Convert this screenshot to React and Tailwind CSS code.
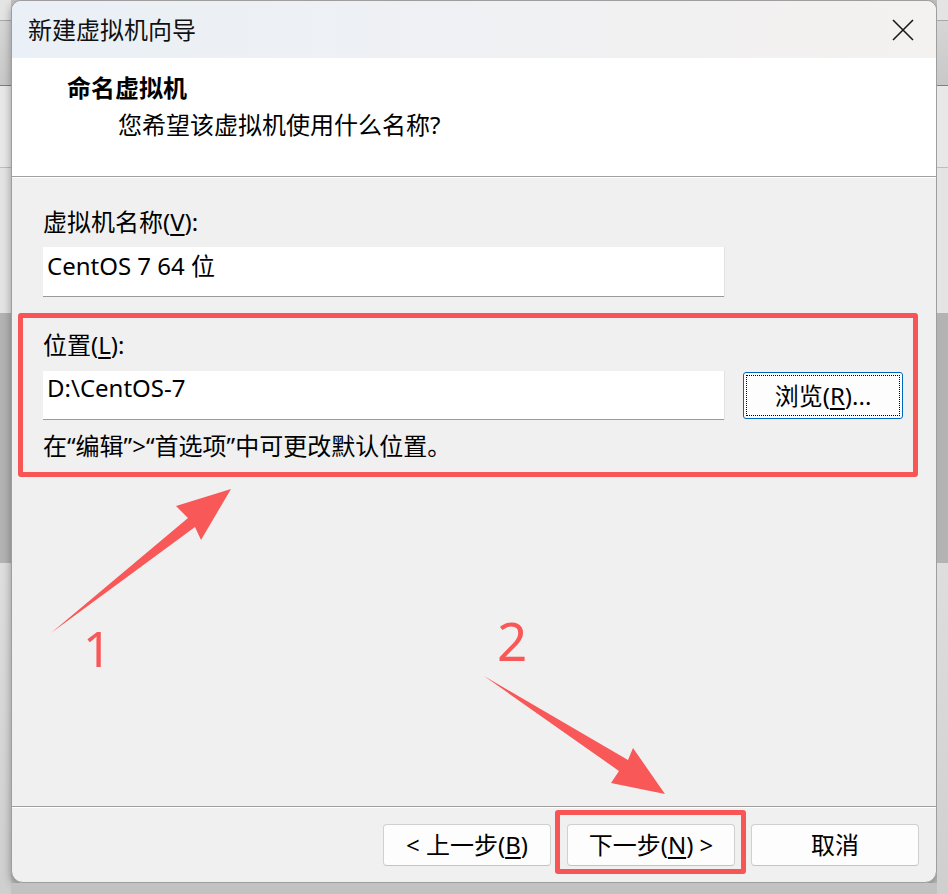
import React from "react";

const FONT = { fontFamily: '"Noto Sans", "Noto Sans CJK SC", sans-serif' };

function Strip() {
  return (
    <div className="flex flex-col w-[11px] h-[894px] shrink-0">
      <div className="h-[20px] bg-[#e4e4e4]" />
      <div className="h-[1px] bg-[#a8a8a8]" />
      <div className="h-[64px] bg-gradient-to-b from-[#d6d6d6] to-[#c8c8c8]" />
      <div className="h-[1px] bg-[#4a8cc4]" />
      <div className="h-[81px] bg-[#e8e8e8]" />
      <div className="h-[1px] bg-[#bdbdbd]" />
      <div className="h-[145px] bg-[#e4e4e4]" />
      <div className="h-[250px] bg-[#b3b3b3]" />
      <div className="h-[331px] bg-gradient-to-b from-[#dedede] to-[#cfcfcf]" />
    </div>
  );
}

function U({ children }) {
  return <span className="underline underline-offset-[3px] decoration-[1.5px]">{children}</span>;
}

function FooterButton({ children }) {
  return (
    <div className="w-[168px] h-[42px] flex items-center justify-center bg-[#fdfdfd] border border-[#d0d0d0] border-b-[#c4c4c4] rounded-[4px] text-[24px] leading-[32px] text-black">
      {children}
    </div>
  );
}

export default function App() {
  return (
    <div className="relative w-[948px] h-[894px] overflow-hidden flex bg-[#c4c4c4]" style={FONT}>
      <Strip />
      <div className="flex flex-col w-[926px] shrink-0">
        <div className="w-[926px] h-[883px] flex flex-col border border-[#9e9e9e] rounded-t-[10px] rounded-b-[12px] overflow-hidden bg-[#f0f0f0] shadow-[0_3px_8px_rgba(0,0,0,0.35)]">
          {/* Title bar */}
          <div className="h-[57px] shrink-0 flex items-center justify-between pl-[16px] pr-[22px] bg-gradient-to-r from-[#eaf0f7] to-[#f4f1ef]">
            <span className="text-[24px] leading-[32px] text-[#111]">新建虚拟机向导</span>
            <svg width="22" height="22" viewBox="0 0 22 22">
              <path d="M1 1 L21 21 M21 1 L1 21" stroke="#1a1a1a" strokeWidth="1.6" fill="none" />
            </svg>
          </div>
          {/* Header */}
          <div className="h-[119px] shrink-0 bg-white border-b border-[#a0a0a0] flex flex-col pt-[14px]">
            <div className="pl-[55px] text-[24px] leading-[32px] font-bold text-black">命名虚拟机</div>
            <div className="pl-[106px] mt-[5px] text-[24px] leading-[32px] text-black">您希望该虚拟机使用什么名称?</div>
          </div>
          {/* Content */}
          <div className="h-[629px] shrink-0 flex flex-col border-t border-white -mt-[0px]">
            <div className="ml-[31px] mt-[28px] text-[24px] leading-[32px] text-black">
              虚拟机名称(<U>V</U>):
            </div>
            <div className="ml-[31px] mt-[9px] w-[681px] h-[50px] bg-white border-b border-[#9a9a9a] shadow-[1px_0_0_#e2e2e2] pl-[4px] pt-[3px] text-[24px] leading-[32px] text-black">
              CentOS 7 64 位
            </div>
            <div className="ml-[6px] mt-[16px] w-[900px] h-[164px] border-[5px] border-[#f85656] rounded-[3px] pl-[20px] pr-[10px] pt-[11px] flex flex-col">
              <div className="text-[24px] leading-[32px] text-black">
                位置(<U>L</U>):
              </div>
              <div className="mt-[10px] flex items-start">
                <div className="w-[681px] h-[49px] bg-white border-b border-[#9a9a9a] shadow-[1px_0_0_#e2e2e2] pl-[4px] pt-[1px] text-[24px] leading-[32px] text-black">
                  D:\CentOS-7
                </div>
                <div className="ml-[19px] mt-[1px] w-[160px] h-[47px] rounded-[3px] border border-[#0067c0] bg-[#fdfdfd] p-[2px]">
                  <div className="w-full h-full border border-dotted border-black flex items-center justify-center text-[24px] leading-[32px] text-black">
                    浏览(<U>R</U>)...
                  </div>
                </div>
              </div>
              <div className="mt-[10px] text-[24px] leading-[32px] text-black">
                在“编辑”&gt;“首选项”中可更改默认位置。
              </div>
            </div>
          </div>
          {/* Footer separator */}
          <div className="h-[1px] shrink-0 bg-[#a0a0a0]" />
          <div className="h-[1px] shrink-0 bg-white" />
          {/* Footer */}
          <div className="h-[74px] shrink-0 flex items-start justify-end pr-[17px] pt-[2px]">
            <div className="mt-[14px]">
              <FooterButton>
                &lt; 上一步(<U>B</U>)
              </FooterButton>
            </div>
            <div className="ml-[4px] border-[5px] border-[#f85656] rounded-[3px] pl-[7px] pr-[6px] pt-[9px] pb-[3px]">
              <FooterButton>
                下一步(<U>N</U>) &gt;
              </FooterButton>
            </div>
            <div className="ml-[5px] mt-[14px]">
              <FooterButton>取消</FooterButton>
            </div>
          </div>
        </div>
        <div className="h-[11px] bg-[#c2c2c2]" />
      </div>
      <Strip />

      {/* Annotations overlay */}
      <svg className="absolute left-0 top-0 pointer-events-none" width="948" height="894" viewBox="0 0 948 894">
        <polygon
          points="231,489 201,540 195,527 51,633 188,518 176,506"
          fill="#f85858"
        />
        <polygon
          points="665,794 611,783 619,771 484,676 628,760 633,748"
          fill="#f85858"
        />
      </svg>
      <div className="absolute left-[83px] top-[623px] text-[50px] leading-[50px] text-[#f85858] pointer-events-none" style={{ fontFamily: '"Noto Sans", sans-serif' }}>
        1
      </div>
      <div className="absolute left-[497px] top-[614px] text-[53px] leading-[53px] text-[#f85858] pointer-events-none" style={{ fontFamily: '"Noto Sans", sans-serif' }}>
        2
      </div>
    </div>
  );
}
